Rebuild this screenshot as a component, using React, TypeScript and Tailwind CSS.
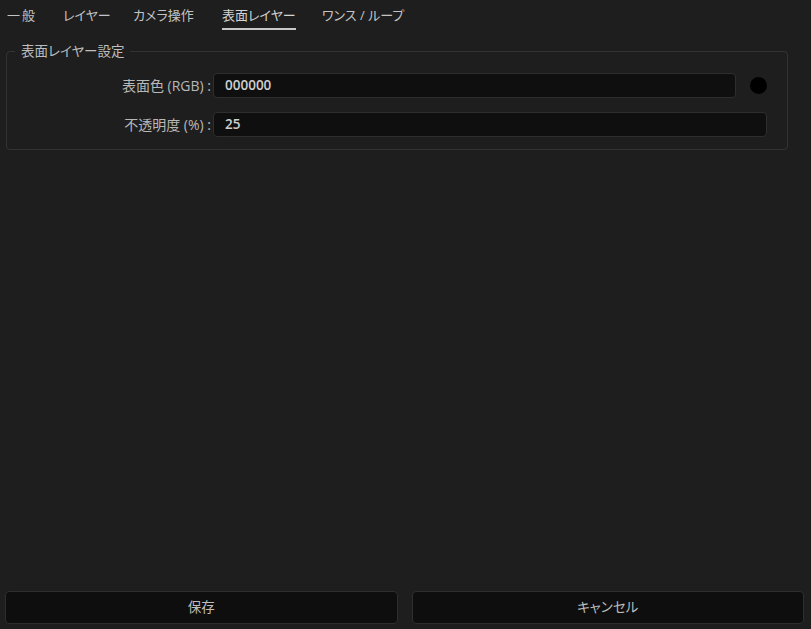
import React from "react";

const tabs: { t: string; w: string }[] = [
  { t: "一般", w: "w-[30px]" },
  { t: "レイヤー", w: "w-[44px]" },
  { t: "カメラ操作", w: "w-[63px]" },
  { t: "表面レイヤー", w: "w-[74px]" },
  { t: "ワンス / ループ", w: "w-[80px]" },
];

export default function App() {
  return (
    <div
      className="w-[811px] h-[629px] bg-[#1e1e1e] flex flex-col text-[13px] text-[#c4c4c4] overflow-hidden"
      style={{ fontFamily: '"Open Sans", "Noto Sans CJK JP", sans-serif' }}
    >
      <div className="flex h-[30px] pl-[7px] gap-[26px] [font-feature-settings:'palt']">
        {tabs.map((tab, i) => (
          <div key={tab.t} className={`flex flex-col ${tab.w}`}>
            <div className={`pt-[5px] leading-[20px] whitespace-nowrap text-[13px] ${i === 0 ? "tracking-[2px]" : ""} ${i === 3 ? "text-[#d4d4d4]" : "text-[#c4c4c4]"}`}>{tab.t}</div>
            <div className={`mt-[3px] h-[2px] ${i === 3 ? "bg-[#c8c8c8]" : "bg-transparent"}`} />
          </div>
        ))}
      </div>

      <fieldset className="mt-[11px] ml-[6px] w-[782px] border border-[#333333] rounded-[4px] p-0 pb-[12px]">
        <legend className="ml-[8px] px-[6px] leading-[20px] text-[13.5px] text-[#bdbdbd] [font-feature-settings:'palt']">表面レイヤー設定</legend>
        <div className="flex flex-col gap-[14px] pt-[12px] pr-[20px]">
          <div className="flex items-center">
            <div className="w-[206px] pr-[2px] text-right text-[14px] text-[#b8b8b8] [font-feature-settings:'palt']">表面色 (RGB) :</div>
            <div className="flex-1 h-[25px] bg-[#0f0f0f] border border-[#2e2e2e] rounded-[4px] pl-[11px] flex items-center text-[13.5px] font-semibold text-[#cfcfcf]">000000</div>
            <div className="ml-[14px] w-[17px] h-[17px] rounded-full bg-black" />
          </div>
          <div className="flex items-center">
            <div className="w-[206px] pr-[2px] text-right text-[14px] text-[#b8b8b8] [font-feature-settings:'palt']">不透明度 (%) :</div>
            <div className="flex-1 h-[25px] bg-[#0f0f0f] border border-[#2e2e2e] rounded-[4px] pl-[11px] flex items-center text-[13.5px] font-semibold text-[#cfcfcf]">25</div>
          </div>
        </div>
      </fieldset>

      <div className="mt-auto flex gap-[14px] pl-[5px] pr-[7px] pb-[5px]">
        <button className="flex-1 h-[33px] bg-[#0e0e0e] border border-[#2e2e2e] rounded-[4px] text-[13.5px] text-[#bdbdbd] [font-feature-settings:'palt']">保存</button>
        <button className="flex-1 h-[33px] bg-[#0e0e0e] border border-[#2e2e2e] rounded-[4px] text-[13.5px] text-[#bdbdbd] [font-feature-settings:'palt']">キャンセル</button>
      </div>
    </div>
  );
}
